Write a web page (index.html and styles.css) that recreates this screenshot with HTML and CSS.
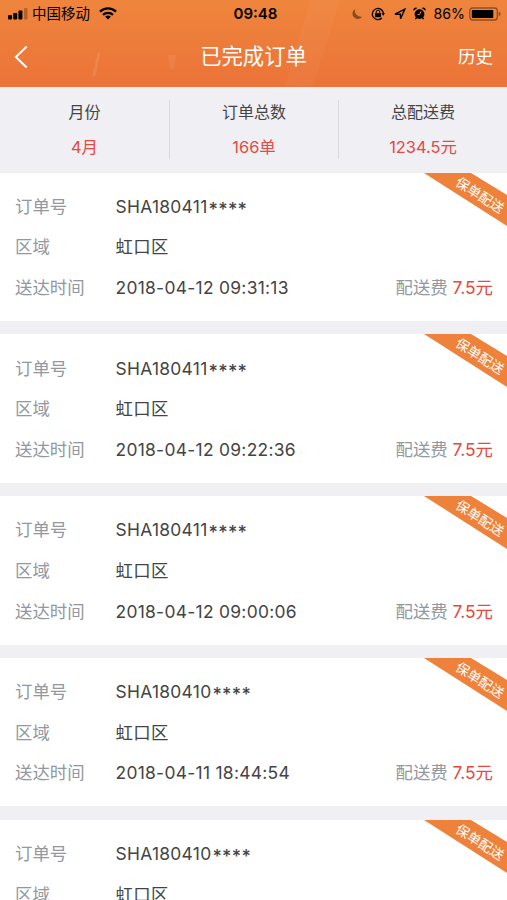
FILE: index.html
```html
<!DOCTYPE html>
<html lang="zh-CN">
<head>
    <meta charset="UTF-8">
    <title>已完成订单</title>
    <link rel="stylesheet" href="styles.css">
</head>
<body>
    <header class="header">
        <svg class="header-bg" width="507" height="87" viewBox="0 0 507 87">
            <path d="M310 0h30l-27 87h-28z" fill="#fff" opacity=".035"/>
            <path d="M98 52l2 1-4 22-4 2z" fill="#fff" opacity=".1"/>
            <path d="M168 55h8l-2 14h-4z" fill="#fff" opacity=".07"/>
        </svg>
        <div class="status-bar">
            <div class="status-left">
                <svg width="20" height="12" viewBox="0 0 20 12">
                    <rect x="0" y="7" width="4" height="4.5" rx="1"/>
                    <rect x="5.2" y="5" width="4" height="6.5" rx="1"/>
                    <rect x="10.4" y="2.5" width="4" height="9" rx="1"/>
                    <rect x="16" y="0" width="3.5" height="11.5" rx="1" opacity=".25"/>
                </svg>
                <span class="carrier">中国移动</span>
                <svg class="wifi" width="18" height="13" viewBox="0 0 18 13" fill="none" stroke="#000" stroke-width="2.3">
                    <path d="M1 4.6a11.5 11.5 0 0 1 16 0"/>
                    <path d="M4 7.9a7.2 7.2 0 0 1 10 0"/>
                    <path d="M9 12.6L6.1 9.8a4.2 4.2 0 0 1 5.8 0z" fill="#000" stroke="none"/>
                </svg>
            </div>
            <div class="clock">09:48</div>
            <div class="status-right">
                <svg width="12" height="12" viewBox="0 0 12 12" opacity=".42">
                    <path d="M4.2 1A5.3 5.3 0 1 0 11.3 8.4 5.8 5.8 0 0 1 4.2 1z"/>
                </svg>
                <svg class="lock" width="14" height="14" viewBox="0 0 14 14" fill="none" stroke="#000">
                    <path d="M10.9 11A5.6 5.6 0 1 1 12.5 6.5" stroke-width="1.3"/>
                    <path d="M10.4 6.2h3.6l-1.8 2.6z" fill="#000" stroke="none"/>
                    <rect x="4" y="6.2" width="6" height="4" fill="#000" stroke="none"/>
                    <path d="M5.2 6.5V5a1.8 1.8 0 0 1 3.6 0v1.5"/>
                </svg>
                <svg class="arrow" width="12" height="12" viewBox="0 0 12 12" fill="none" stroke="#000" stroke-width="1.4">
                    <path d="M1 6.2L10.8 1.2 6.6 10.8 6.3 6.1z"/>
                </svg>
                <svg class="alarm" width="13" height="13" viewBox="0 0 13 13">
                    <circle cx="6.5" cy="7.1" r="4.9"/>
                    <path d="M.6 3.8A2.4 2.4 0 0 1 4.3 1zM12.4 3.8A2.4 2.4 0 0 0 8.7 1zM3 10l1.3 1-1.5 1.5-1-.8zM10 10l-1.3 1 1.5 1.5 1-.8z"/>
                    <path d="M8 4.2L6.7 7.6 4.5 7.4" fill="none" stroke="#ed803b" stroke-width="1"/>
                </svg>
                <span class="percent">86%</span>
                <svg class="battery" width="32" height="14" viewBox="0 0 32 14">
                    <rect x=".8" y="1" width="27.5" height="12" rx="2.8" fill="none" stroke="#000" stroke-opacity=".4" stroke-width="1.3"/>
                    <rect x="2.8" y="3" width="21.5" height="8" rx=".8"/>
                    <path d="M29.7 4.8q2 .6 2 2.2t-2 2.2z" opacity=".4"/>
                </svg>
            </div>
        </div>
        <div class="nav-bar">
            <svg class="back" width="14" height="24" viewBox="0 0 14 24" fill="none" stroke="#fff" stroke-width="2">
                <path d="M12.7 1.5L1.8 12l10.9 10.5"/>
            </svg>
            <h1 class="title">已完成订单</h1>
            <a class="history">历史</a>
        </div>
    </header>

    <section class="summary">
        <div class="summary-item"><span>月份</span><b>4月</b></div>
        <div class="summary-item"><span>订单总数</span><b>166单</b></div>
        <div class="summary-item"><span>总配送费</span><b>1234.5元</b></div>
    </section>

    <main class="orders">
        <article class="order">
            <svg class="ribbon" width="83" height="53" viewBox="0 0 83 53">
                <path d="M0 0h47L83 22v31z"/>
                <text x="56" y="27" transform="rotate(32.5 56 22)">保单配送</text>
            </svg>
            <div class="row"><span class="label">订单号</span><span class="value">SHA180411<i>****</i></span></div>
            <div class="row"><span class="label">区域</span><span class="value">虹口区</span></div>
            <div class="row"><span class="label">送达时间</span><span class="value time">2018-04-12 09:31:13</span><span class="fee">配送费 <em>7.5元</em></span></div>
        </article>
        <article class="order">
            <svg class="ribbon" width="83" height="53" viewBox="0 0 83 53">
                <path d="M0 0h47L83 22v31z"/>
                <text x="56" y="27" transform="rotate(32.5 56 22)">保单配送</text>
            </svg>
            <div class="row"><span class="label">订单号</span><span class="value">SHA180411<i>****</i></span></div>
            <div class="row"><span class="label">区域</span><span class="value">虹口区</span></div>
            <div class="row"><span class="label">送达时间</span><span class="value time">2018-04-12 09:22:36</span><span class="fee">配送费 <em>7.5元</em></span></div>
        </article>
        <article class="order">
            <svg class="ribbon" width="83" height="53" viewBox="0 0 83 53">
                <path d="M0 0h47L83 22v31z"/>
                <text x="56" y="27" transform="rotate(32.5 56 22)">保单配送</text>
            </svg>
            <div class="row"><span class="label">订单号</span><span class="value">SHA180411<i>****</i></span></div>
            <div class="row"><span class="label">区域</span><span class="value">虹口区</span></div>
            <div class="row"><span class="label">送达时间</span><span class="value time">2018-04-12 09:00:06</span><span class="fee">配送费 <em>7.5元</em></span></div>
        </article>
        <article class="order">
            <svg class="ribbon" width="83" height="53" viewBox="0 0 83 53">
                <path d="M0 0h47L83 22v31z"/>
                <text x="56" y="27" transform="rotate(32.5 56 22)">保单配送</text>
            </svg>
            <div class="row"><span class="label">订单号</span><span class="value">SHA180410<i>****</i></span></div>
            <div class="row"><span class="label">区域</span><span class="value">虹口区</span></div>
            <div class="row"><span class="label">送达时间</span><span class="value time">2018-04-11 18:44:54</span><span class="fee">配送费 <em>7.5元</em></span></div>
        </article>
        <article class="order">
            <svg class="ribbon" width="83" height="53" viewBox="0 0 83 53">
                <path d="M0 0h47L83 22v31z"/>
                <text x="56" y="27" transform="rotate(32.5 56 22)">保单配送</text>
            </svg>
            <div class="row"><span class="label">订单号</span><span class="value">SHA180410<i>****</i></span></div>
            <div class="row"><span class="label">区域</span><span class="value">虹口区</span></div>
        </article>
    </main>
</body>
</html>
```
FILE: styles.css
```css
* { box-sizing: border-box; }
body { margin: 0; height: 900px; overflow: hidden; background: #efeff4; color: #444; font-family: Inter, "Noto Sans CJK SC", sans-serif; }
svg { display: block; flex: none; }

.header { position: relative; height: 87px; background: linear-gradient(#ef853c, #eb7338); }
.header-bg { position: absolute; left: 0; top: 0; }
.status-bar { position: relative; display: grid; grid-template-columns: 1fr auto 1fr; align-items: center; height: 27px; padding: 0 6px 0 10px; color: #000; font-size: 14px; line-height: 20px; }
.status-left, .status-right { display: flex; align-items: center; }
.status-left { margin-left: -2px; }
.status-right { justify-content: flex-end; }
.carrier { margin-left: 4px; font-size: 14.5px; }
.wifi { margin-left: 9px; }
.clock { font-size: 15px; font-weight: 600; }
.lock { margin-left: 8px; }
.arrow { margin-left: 9px; }
.alarm { margin-left: 7px; }
.percent { margin-left: 7px; font-size: 14.2px; }
.battery { margin-left: 4px; }

.nav-bar { position: relative; display: grid; grid-template-columns: 60px 1fr 60px; align-items: center; height: 60px; padding: 0 14px; color: #fff; }
.title { margin: 0 0 2px; font-size: 21.3px; font-weight: 400; line-height: 30px; text-align: center; }
.history { font-size: 17.5px; line-height: 26px; text-align: right; }

.summary { display: grid; grid-template-columns: repeat(3, 1fr); height: 85.5px; padding: 13px 0 14px; font-size: 16px; text-align: center; }
.summary-item { display: flex; flex-direction: column; line-height: 24px; gap: 11px; }
.summary-item + .summary-item { border-left: 1px solid #d9d9de; }
.summary-item b { color: #e5493f; font-weight: 400; font-size: 16.4px; }

.orders { display: flex; flex-direction: column; gap: 13.3px; }
.order { position: relative; flex: none; height: 148.5px; padding: 14px 14px 0 15px; background: #fff; }
.row { display: flex; align-items: center; height: 40.6px; font-size: 17.4px; line-height: 26px; white-space: nowrap; }
.label { width: 100.5px; color: #93989f; }
.value { letter-spacing: .3px; }
.value i { margin-left: 1px; font-style: normal; font-weight: 500; font-size: 18px; vertical-align: -3px; line-height: 1; }
.fee { margin-left: auto; color: #93989f; }
.fee em { color: #e5493f; font-style: normal; }
.ribbon { position: absolute; right: 0; top: 0; fill: #ee823b; }
.ribbon text { fill: #fff; font-size: 13.5px; text-anchor: middle; }
```
